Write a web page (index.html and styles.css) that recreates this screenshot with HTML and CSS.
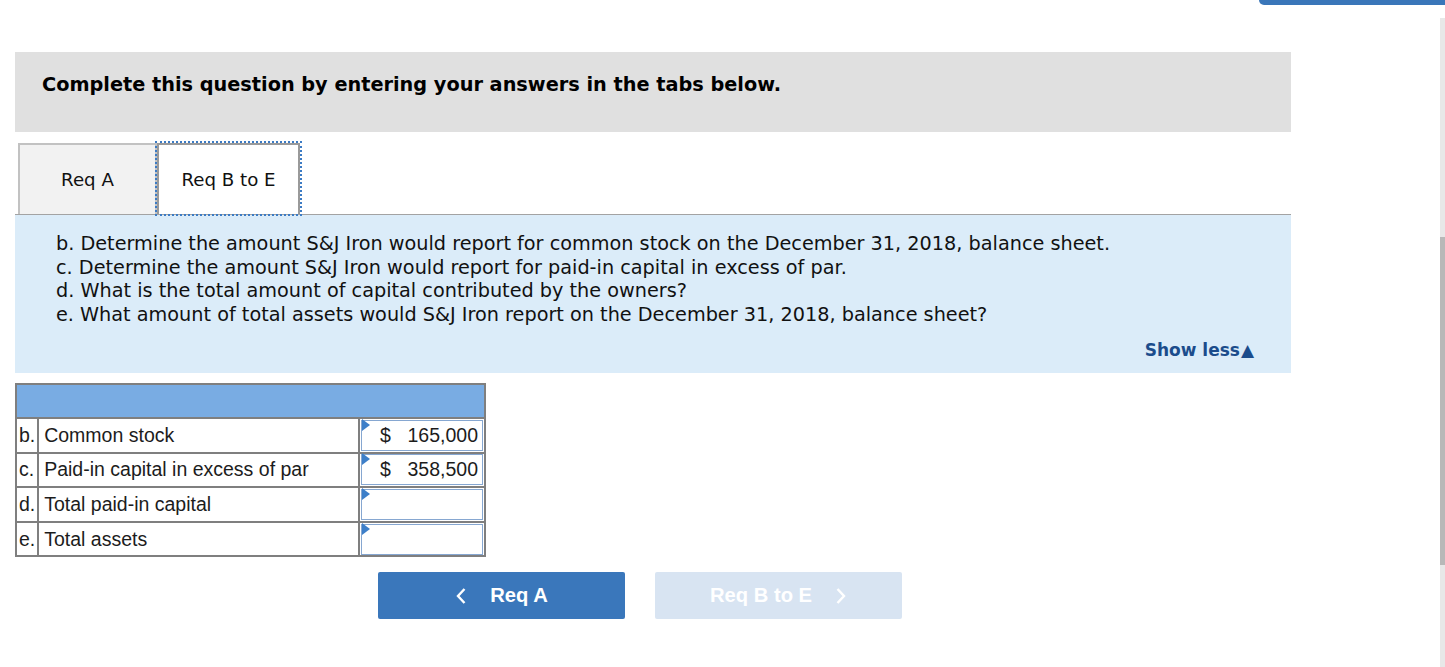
FILE: index.html
```html
<!DOCTYPE html>
<html>
<head>
<meta charset="utf-8">
<link rel="stylesheet" href="styles.css">
</head>
<body>
<div class="topbar"></div>
<div class="scrolltrack"><div class="scrollthumb"></div></div>
<main class="page">
  <div class="instr">Complete this question by entering your answers in the tabs below.</div>
  <div class="tabs">
    <div class="tab tab-off">Req A</div>
    <div class="tab tab-on">Req B to E</div>
  </div>
  <section class="question">
    <p>b. Determine the amount S&amp;J Iron would report for common stock on the December 31, 2018, balance sheet.</p>
    <p>c. Determine the amount S&amp;J Iron would report for paid-in capital in excess of par.</p>
    <p>d. What is the total amount of capital contributed by the owners?</p>
    <p>e. What amount of total assets would S&amp;J Iron report on the December 31, 2018, balance sheet?</p>
    <div class="showless">Show less<span class="tri">&#9650;</span></div>
  </section>
  <table class="grid">
    <tr class="head"><td colspan="3"></td></tr>
    <tr><td class="let">b.</td><td class="lbl">Common stock</td><td class="val"><div class="inp"><span class="flag"></span><span class="cur">$</span><span class="num">165,000</span></div></td></tr>
    <tr><td class="let">c.</td><td class="lbl">Paid-in capital in excess of par</td><td class="val"><div class="inp"><span class="flag"></span><span class="cur">$</span><span class="num">358,500</span></div></td></tr>
    <tr><td class="let">d.</td><td class="lbl">Total paid-in capital</td><td class="val"><div class="inp"><span class="flag"></span></div></td></tr>
    <tr><td class="let">e.</td><td class="lbl">Total assets</td><td class="val"><div class="inp"><span class="flag"></span></div></td></tr>
  </table>
  <nav class="navbtns">
    <div class="btn btn-prev"><svg class="chev chev-l" width="12" height="18" viewBox="0 0 12 18"><polyline points="9.5,2 3,9 9.5,16" fill="none" stroke="#fff" stroke-width="2.4"/></svg>Req A</div>
    <div class="btn btn-next">Req B to E<svg class="chev chev-r" width="12" height="18" viewBox="0 0 12 18"><polyline points="2.5,2 9,9 2.5,16" fill="none" stroke="#fff" stroke-width="2.4"/></svg></div>
  </nav>
</main>
</body>
</html>
```
FILE: styles.css
```css
html, body {
  margin: 0;
  padding: 0;
  background: #ffffff;
}
body {
  font-family: "DejaVu Sans", Verdana, sans-serif;
  color: #000;
  width: 1445px;
  height: 667px;
  overflow: hidden;
  position: relative;
}
.topbar {
  position: absolute;
  top: 0;
  left: 1259px;
  width: 186px;
  height: 5px;
  background: #3a76b9;
  border-bottom-left-radius: 5px;
}
.scrolltrack {
  position: absolute;
  top: 18px;
  left: 1440px;
  width: 5px;
  height: 649px;
  background: #e8e8e8;
}
.scrollthumb {
  margin-top: 219px;
  height: 328px;
  background: #b8b8b8;
}
.page {
  padding-top: 52px;
  margin-left: 15px;
  width: 1276px;
}
.instr {
  background: #e0e0e0;
  height: 80px;
  box-sizing: border-box;
  padding: 21px 0 0 27px;
  font-weight: bold;
  font-size: 19.3px;
  line-height: 24px;
  color: #000;
}
.tabs {
  display: flex;
  margin-top: 11px;
  padding-left: 3px;
  height: 71px;
  border-bottom: 1px solid #a3a3a3;
}
.tab {
  box-sizing: border-box;
  height: 71px;
  display: flex;
  align-items: center;
  justify-content: center;
  font-size: 18.2px;
  padding-top: 0;
  color: #111;
}
.tab-off {
  width: 139px;
  background: #f2f2f2;
  border: 2px solid #c2c2c2;
  border-bottom: none;
}
.tab-on {
  width: 143px;
  background: #fff;
  border: 2px solid #9a9a9a;
  border-bottom: none;
  outline: 2px dotted #3c7bc4;
  outline-offset: 0px;
}
.question {
  background: #dbecf9;
  height: 158px;
  box-sizing: border-box;
  padding: 17px 0 0 41px;
  font-size: 19.25px;
  line-height: 23.6px;
  color: #111;
}
.question p {
  margin: 0;
}
.showless {
  margin-top: 13px;
  margin-right: 37px;
  text-align: right;
  font-weight: bold;
  font-size: 17px;
  line-height: 22px;
  color: #1b4c8c;
}
.tri {
  font-size: 17px;
  margin-left: 1px;
}
.grid {
  margin-top: 10px;
  border-collapse: collapse;
  border: 2px solid #7f7f7f;
  font-family: "Liberation Sans", Arial, sans-serif;
  font-size: 19.5px;
  color: #1c1c1c;
}
.grid td {
  border: 2px solid #7f7f7f;
  padding: 0;
  height: 32.6px;
}
.grid .head td {
  background: #79ace3;
  height: 32px;
  width: 467px;
}
.let {
  width: 22px;
  padding-left: 2px !important;
  box-sizing: border-box;
}
.lbl {
  width: 318px;
  padding-left: 5px !important;
  box-sizing: border-box;
}
.val {
  width: 123px;
  position: relative;
}
.inp {
  position: relative;
  box-sizing: border-box;
  height: 31px;
  margin: 0 1px 0 1px;
  border: 1px solid #86a7d1;
  background: #fff;
  display: flex;
  align-items: center;
  padding-right: 4px;
}
.flag {
  position: absolute;
  left: 0;
  width: 0;
  height: 0;
  border-top: 6px solid transparent;
  border-bottom: 6px solid transparent;
  border-left: 8px solid #3d7fc9;
  top: -2px;
}
.cur {
  margin-left: 18px;
}
.num {
  margin-left: auto;
}
.navbtns {
  display: flex;
  gap: 30px;
  margin-top: 15px;
  padding-left: 363px;
}
.btn {
  width: 247px;
  height: 47px;
  border-radius: 2px;
  display: flex;
  align-items: center;
  justify-content: center;
  font-family: "Liberation Sans", Arial, sans-serif;
  font-weight: bold;
  font-size: 20.2px;
  color: #fff;
}
.btn-prev {
  background: #3a77bb;
}
.btn-next {
  background: #d8e4f2;
}
.chev-l {
  margin-right: 23px;
}
.chev-r {
  margin-left: 23px;
}
```
